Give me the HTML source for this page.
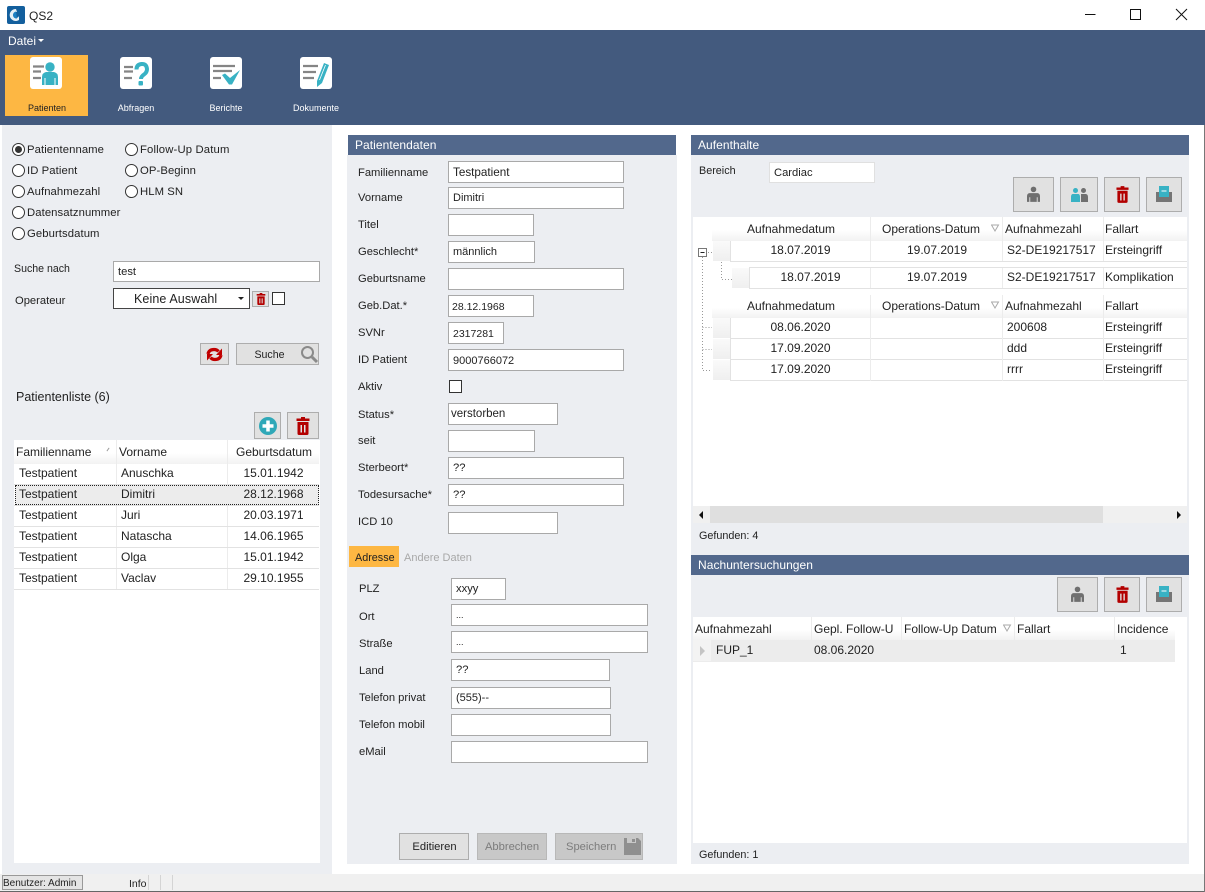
<!DOCTYPE html>
<html lang="de"><head><meta charset="utf-8"><title>QS2</title>
<style>
html,body{margin:0;padding:0;width:1205px;height:892px;overflow:hidden;background:#fff}
body{position:relative;font-family:"Liberation Sans",sans-serif;font-size:11.200px;color:#222;letter-spacing:0}
div,span,svg{position:absolute;box-sizing:border-box}
.t{line-height:18px;white-space:nowrap;height:18px}
.t.g,.t.rl,.t.p{line-height:16px;height:16px}
.g{font-size:12px}
.c{transform:translateX(-50%)}
.hd{background:#52688c;color:#fff;height:20px;line-height:20px;padding-left:7px;font-size:12px;letter-spacing:.05px}
.i{background:#fff;border:1px solid #a9a9a9;height:22px;line-height:21px;padding-left:4px;white-space:nowrap}
.b{background:#e1e1e1;border:1px solid #adadad}
.r{width:13px;height:13px;border:1px solid #333;border-radius:50%;background:#fff}
.gh{background:linear-gradient(#fff 0%,#fff 55%,#f2f2f2 100%)}
.rh{background:linear-gradient(#fafafa,#efefef)}
.l{background:#e2e2e2}
.rl{font-size:9px;color:#fff}
.ra{letter-spacing:.08px;font-size:11.300px}
</style></head><body>
<svg width="0" height="0" style="left:0;top:0">
<symbol id="trash" viewBox="0 0 14 18"><path fill="#b30000" fill-rule="evenodd" d="M5 0h4v1.500h4.500v2.500H.5V1.500H5zM1.500 5h11v11.500q0 1.500-1.500 1.500H3q-1.500 0-1.500-1.500zM4.500 8v7.500h1.500V8zM8 8v7.500h1.500V8z"/></symbol>
<symbol id="person" viewBox="0 0 14 18"><circle cx="7" cy="3.500" r="3" fill="#6f6f6f"/><path fill="#6f6f6f" d="M2.500 7.500h9Q14 8 14 11v6h-2.500v-5h-1v5h-7v-5h-1v5H0v-6q0-3 2.500-3.500z"/></symbol>
<symbol id="save" viewBox="0 0 16 16"><path fill="#757575" d="M0 6h3v5h10V6h3v10H0z"/><rect x="3" y="0" width="10" height="11" fill="#38b2c4"/><rect x="5.500" y="4.500" width="5" height="1" fill="#fff"/></symbol>
</svg>

<!-- title bar -->
<svg style="left:7px;top:6px" width="18" height="18" viewBox="0 0 18 18"><rect width="18" height="18" rx="2" fill="#135f9d"/><path d="M9 3a6 6 0 1 0 3 11V10a3 3 0 1 1-2-4z" fill="#fff" opacity=".9"/><path d="M12 3h3v12h-3z" fill="#135f9d"/><path d="M9 5.500a3.500 3.500 0 1 0 1 7z" fill="#1d7fc2"/></svg>
<div class="t p" style="left:29px;top:8px;font-size:12px">QS2</div>
<svg style="left:1080px;top:5px" width="115" height="20" viewBox="0 0 115 20" fill="none" stroke="#111" stroke-width="1"><path d="M5 9.500h10.500M50.500 4.500h10v10h-10zM96 4l11 11M107 4L96 15"/></svg>

<!-- ribbon -->
<div style="left:0;top:30px;width:1205px;height:95px;background:#435a7e"></div>
<div class="t p" style="left:8px;top:33px;color:#fff;font-size:12px">Datei</div>
<div style="left:38px;top:39px;width:0;height:0;border:3px solid transparent;border-top:3px solid #fff;border-bottom:0"></div>
<div style="left:5px;top:55px;width:83px;height:61px;background:#fdb743"></div>

<svg style="left:30px;top:57px" width="32" height="32" viewBox="0 0 32 32"><rect width="32" height="32" rx="3" fill="#fff"/><path d="M3 9.500h11M3 14.500h8M3 21h8" stroke="#858585" stroke-width="2.200"/><circle cx="20" cy="10" r="4.700" fill="#38b2c4"/><path d="M12 28V20q0-4 4-5h8q4 1 4 5v8h-2.500v-7h-1v7h-9v-7h-1v7z" fill="#38b2c4"/></svg>
<svg style="left:120px;top:57px" width="32" height="32" viewBox="0 0 32 32"><rect width="32" height="32" rx="3" fill="#fff"/><path d="M4 10h9M4 14.500h9M4 21h8" stroke="#858585" stroke-width="2.200"/><path d="M16.500 12.500q0-5 5-5.500t5.500 5q0 3.500-3 5.500t-3 4.500" fill="none" stroke="#38b2c4" stroke-width="4"/><rect x="18.500" y="24" width="4.500" height="4.500" rx="1" fill="#38b2c4"/></svg>
<svg style="left:210px;top:57px" width="32" height="32" viewBox="0 0 32 32"><rect width="32" height="32" rx="3" fill="#fff"/><path d="M3 9h22M3 14h19M3 21h8" stroke="#858585" stroke-width="2.200"/><path d="M12 18l3-1.500 5 4.500 10-8-8 14.500h-3z" fill="#38b2c4"/></svg>
<svg style="left:300px;top:57px" width="32" height="32" viewBox="0 0 32 32"><rect width="32" height="32" rx="3" fill="#fff"/><path d="M3 9h15M3 15h13M3 21h11" stroke="#858585" stroke-width="2.200"/><path d="M24 6l5 2-7 18-5 4 0-6z" fill="#38b2c4"/><path d="M25.500 8l-6 15" stroke="#fff" stroke-width=".8"/></svg>

<div class="t c rl" style="left:47px;top:100px;color:#222">Patienten</div>
<div class="t c rl" style="left:136px;top:100px">Abfragen</div>
<div class="t c rl" style="left:226px;top:100px">Berichte</div>
<div class="t c rl" style="left:316px;top:100px">Dokumente</div>

<!-- left panel -->
<div style="left:2px;top:125px;width:330px;height:749px;background:#eceef2"></div>
<div class="r" style="left:12px;top:143px"></div><div style="left:15px;top:146px;width:7px;height:7px;border-radius:50%;background:#333"></div>
<div class="r" style="left:12px;top:164px"></div><div class="r" style="left:12px;top:185px"></div><div class="r" style="left:12px;top:206px"></div><div class="r" style="left:12px;top:227px"></div>
<div class="r" style="left:125px;top:143px"></div><div class="r" style="left:125px;top:164px"></div><div class="r" style="left:125px;top:185px"></div>
<div class="t ra" style="left:27px;top:141px">Patientenname</div>
<div class="t ra" style="left:27px;top:162px">ID Patient</div>
<div class="t ra" style="left:27px;top:183px">Aufnahmezahl</div>
<div class="t ra" style="left:27px;top:204px">Datensatznummer</div>
<div class="t ra" style="left:27px;top:225px">Geburtsdatum</div>
<div class="t ra" style="left:140px;top:141px;letter-spacing:.15px">Follow-Up Datum</div>
<div class="t ra" style="left:140px;top:162px">OP-Beginn</div>
<div class="t ra" style="left:140px;top:183px">HLM SN</div>

<div class="t" style="left:14px;top:260px;font-size:10.600px">Suche nach</div>
<div class="i" style="left:113px;top:261px;width:207px;height:21px;line-height:20px">test</div>
<div class="t" style="left:15px;top:292px">Operateur</div>
<div style="left:113px;top:288px;width:137px;height:21px;background:#fff;border:1px solid #444"></div>
<div class="t" style="left:134px;top:290px;font-size:12.500px;letter-spacing:.1px">Keine Auswahl</div>
<div style="left:238px;top:297px;width:0;height:0;border:3px solid transparent;border-top:3px solid #222;border-bottom:0"></div>
<div class="b" style="left:252px;top:291px;width:17px;height:16px"></div>
<svg style="left:256px;top:293px" width="10" height="12"><use href="#trash"/></svg>
<div style="left:272px;top:292px;width:13px;height:13px;background:#fff;border:1px solid #333"></div>

<div class="b" style="left:200px;top:343px;width:29px;height:22px"></div>
<svg style="left:205px;top:347px" width="19" height="15" viewBox="0 0 19 15" fill="none" stroke="#c00000" stroke-width="3.200"><path d="M3 7q1-4.500 6-4.500 3 0 4.500 2"/><path d="M16 8q-1 4.500-6 4.500-3 0-4.500-2"/><path d="M11 8l6-6.500V8zM8 7l-6 6.500V7z" fill="#c00000" stroke="none"/></svg>
<div class="b" style="left:236px;top:343px;width:83px;height:22px"></div>
<div class="t c" style="left:269.500px;top:346px;font-size:10.600px">Suche</div>
<svg style="left:299px;top:344px" width="20" height="20" viewBox="0 0 20 20" fill="none" stroke="#8a8a8a"><circle cx="8.500" cy="8.500" r="5.500" stroke-width="2"/><path d="M13 13l5 5" stroke-width="3"/></svg>

<div class="t p" style="left:16px;top:389px;font-size:12.500px">Patientenliste (6)</div>
<div class="b" style="left:254px;top:412px;width:27px;height:27px"></div>
<svg style="left:259px;top:417px" width="18" height="18" viewBox="0 0 18 18"><circle cx="9" cy="9" r="9" fill="#2fa8b8"/><path d="M9 3.500v11M3.500 9h11" stroke="#fff" stroke-width="3.500"/></svg>
<div class="b" style="left:287px;top:412px;width:32px;height:27px"></div>
<svg style="left:296px;top:417px" width="14" height="18"><use href="#trash"/></svg>

<div style="left:14px;top:440px;width:306px;height:423px;background:#fff"></div>
<div class="gh" style="left:14px;top:440px;width:305px;height:24px"></div>
<div class="l" style="left:116px;top:440px;width:1px;height:149px;background:#ececec"></div>
<div class="l" style="left:227px;top:440px;width:1px;height:149px;background:#ececec"></div>
<div class="t g" style="left:16px;top:444px">Familienname</div>
<div class="t g" style="left:119px;top:444px">Vorname</div>
<div class="t g" style="left:236px;top:444px">Geburtsdatum</div>
<div style="left:106px;top:449px;width:4px;height:1px;background:#999;transform:rotate(-55deg)"></div>

<div style="left:15px;top:485px;width:304px;height:20px;background:#ececec;border:1px dotted #222"></div>
<div class="l" style="left:14px;top:484px;width:305px;height:1px"></div>
<div class="l" style="left:14px;top:505px;width:305px;height:1px"></div>
<div class="l" style="left:14px;top:526px;width:305px;height:1px"></div>
<div class="l" style="left:14px;top:547px;width:305px;height:1px"></div>
<div class="l" style="left:14px;top:568px;width:305px;height:1px"></div>
<div class="l" style="left:14px;top:589px;width:305px;height:1px"></div>

<div class="t g" style="left:19px;top:465px">Testpatient</div><div class="t g" style="left:121px;top:465px">Anuschka</div><div class="t c g" style="left:273.500px;top:465px">15.01.1942</div>
<div class="t g" style="left:19px;top:486px">Testpatient</div><div class="t g" style="left:121px;top:486px">Dimitri</div><div class="t c g" style="left:273.500px;top:486px">28.12.1968</div>
<div class="t g" style="left:19px;top:507px">Testpatient</div><div class="t g" style="left:121px;top:507px">Juri</div><div class="t c g" style="left:273.500px;top:507px">20.03.1971</div>
<div class="t g" style="left:19px;top:528px">Testpatient</div><div class="t g" style="left:121px;top:528px">Natascha</div><div class="t c g" style="left:273.500px;top:528px">14.06.1965</div>
<div class="t g" style="left:19px;top:549px">Testpatient</div><div class="t g" style="left:121px;top:549px">Olga</div><div class="t c g" style="left:273.500px;top:549px">15.01.1942</div>
<div class="t g" style="left:19px;top:570px">Testpatient</div><div class="t g" style="left:121px;top:570px">Vaclav</div><div class="t c g" style="left:273.500px;top:570px">29.10.1955</div>

<!-- middle panel -->
<div style="left:347px;top:155px;width:330px;height:709px;background:#eceef2"></div>
<div class="hd" style="left:348px;top:135px;width:328px">Patientendaten</div>

<div class="t" style="left:358px;top:164px">Familienname</div><div class="i" style="left:448px;top:161px;width:176px;font-size:11.700px">Testpatient</div>
<div class="t" style="left:358px;top:189px">Vorname</div><div class="i" style="left:448px;top:187px;width:176px;font-size:11px">Dimitri</div>
<div class="t" style="left:358px;top:216px">Titel</div><div class="i" style="left:448px;top:214px;width:86px"></div>
<div class="t" style="left:358px;top:243px">Geschlecht*</div><div class="i" style="left:448px;top:241px;width:87px;font-size:11px">männlich</div>
<div class="t" style="left:358px;top:270px">Geburtsname</div><div class="i" style="left:448px;top:268px;width:176px"></div>
<div class="t" style="left:358px;top:297px">Geb.Dat.*</div><div class="i" style="left:448px;top:295px;width:86px;font-size:10.500px;padding-left:3px;line-height:22px">28.12.1968</div>
<div class="t" style="left:358px;top:324px">SVNr</div><div class="i" style="left:448px;top:322px;width:56px;font-size:10.500px;line-height:22px">2317281</div>
<div class="t" style="left:358px;top:351px">ID Patient</div><div class="i" style="left:448px;top:349px;width:176px;font-size:11px;line-height:22px">9000766072</div>
<div class="t" style="left:358px;top:378px">Aktiv</div><div style="left:449px;top:380px;width:13px;height:13px;background:#fff;border:1px solid #333"></div>
<div class="t" style="left:358px;top:406px">Status*</div><div class="i" style="left:448px;top:403px;width:110px;padding-left:2px;font-size:11.500px">verstorben</div>
<div class="t" style="left:358px;top:432px">seit</div><div class="i" style="left:448px;top:430px;width:87px"></div>
<div class="t" style="left:358px;top:459px">Sterbeort*</div><div class="i" style="left:448px;top:457px;width:176px">??</div>
<div class="t" style="left:358px;top:486px">Todesursache*</div><div class="i" style="left:448px;top:484px;width:176px">??</div>
<div class="t" style="left:358px;top:513px">ICD 10</div><div class="i" style="left:448px;top:512px;width:110px"></div>

<div style="left:349px;top:546px;width:50px;height:21px;background:#fdb743"></div>
<div class="t" style="left:355px;top:549px;font-size:10.800px">Adresse</div>
<div class="t" style="left:404px;top:549px;color:#a8a8a8;font-size:11px">Andere Daten</div>

<div class="t" style="left:359px;top:580px">PLZ</div><div class="i" style="left:451px;top:578px;width:55px">xxyy</div>
<div class="t" style="left:359px;top:608px">Ort</div><div class="i" style="left:451px;top:604px;width:197px;font-size:9px">...</div>
<div class="t" style="left:359px;top:635px">Straße</div><div class="i" style="left:451px;top:631px;width:197px;font-size:9px">...</div>
<div class="t" style="left:359px;top:662px">Land</div><div class="i" style="left:451px;top:659px;width:159px">??</div>
<div class="t" style="left:359px;top:689px">Telefon privat</div><div class="i" style="left:451px;top:687px;width:160px;font-size:11px">(555)--</div>
<div class="t" style="left:359px;top:716px">Telefon mobil</div><div class="i" style="left:451px;top:714px;width:160px"></div>
<div class="t" style="left:359px;top:743px">eMail</div><div class="i" style="left:451px;top:741px;width:197px"></div>

<div class="b" style="left:399px;top:833px;width:70px;height:27px"></div>
<div class="t c" style="left:434.500px;top:838px">Editieren</div>
<div style="left:477px;top:833px;width:70px;height:27px;background:#c8c8c8;border:1px solid #b8b8b8"></div>
<div class="t c" style="left:512px;top:838px;color:#7c7c7c">Abbrechen</div>
<div style="left:555px;top:833px;width:88px;height:27px;background:#c8c8c8;border:1px solid #b8b8b8"></div>
<div class="t" style="left:566px;top:838px;color:#7c7c7c">Speichern</div>
<svg style="left:624px;top:838px" width="17" height="17" viewBox="0 0 17 17"><path fill="#8f8f8f" d="M0 0h3v5h9V0h2l3 3v14H0z"/><rect x="8" y="1" width="3" height="3" fill="#8f8f8f"/></svg>

<!-- right panel -->
<div style="left:691px;top:155px;width:498px;height:709px;background:#eceef2"></div>
<div class="hd" style="left:691px;top:135px;width:498px">Aufenthalte</div>
<div class="t" style="left:699px;top:162px;font-size:10.800px">Bereich</div>
<div class="i" style="left:769px;top:162px;width:106px;height:21px;border-color:#e0e0e0">Cardiac</div>

<div class="b" style="left:1013px;top:177px;width:41px;height:35px"></div>
<svg style="left:1027px;top:186px" width="13" height="17"><use href="#person"/></svg>
<div class="b" style="left:1060px;top:177px;width:38px;height:35px"></div>
<svg style="left:1071px;top:188px" width="17" height="14" viewBox="0 0 17 14"><circle cx="4.500" cy="2.500" r="2.500" fill="#38b2c4"/><path d="M1.500 6h6Q9 6.500 9 9v5H0V9q0-2.500 1.500-3z" fill="#38b2c4"/><circle cx="12.500" cy="2.500" r="2.500" fill="#6f6f6f"/><path d="M10 6h5q2 .5 2 3v5h-7z" fill="#6f6f6f"/></svg>
<div class="b" style="left:1104px;top:177px;width:36px;height:35px"></div>
<svg style="left:1116px;top:186px" width="13" height="17"><use href="#trash"/></svg>
<div class="b" style="left:1146px;top:177px;width:36px;height:35px"></div>
<svg style="left:1156px;top:186px" width="16" height="16"><use href="#save"/></svg>

<div style="left:693px;top:217px;width:494px;height:289px;background:#fff"></div>
<div class="gh" style="left:712px;top:217px;width:475px;height:24px"></div>
<div class="gh" style="left:712px;top:295px;width:475px;height:23px"></div>
<div class="rh" style="left:713px;top:241px;width:17px;height:20px"></div>
<div class="rh" style="left:732px;top:268px;width:17px;height:20px"></div>
<div class="rh" style="left:713px;top:318px;width:17px;height:20px"></div>
<div class="rh" style="left:713px;top:339px;width:17px;height:20px"></div>
<div class="rh" style="left:713px;top:360px;width:17px;height:20px"></div>

<div class="l" style="left:730px;top:261px;width:457px;height:1px"></div>
<div class="l" style="left:749px;top:267px;width:438px;height:1px"></div>
<div class="l" style="left:749px;top:288px;width:438px;height:1px"></div>
<div class="l" style="left:730px;top:338px;width:457px;height:1px"></div>
<div class="l" style="left:730px;top:359px;width:457px;height:1px"></div>
<div class="l" style="left:730px;top:380px;width:457px;height:1px"></div>
<div class="l" style="left:730px;top:241px;width:1px;height:20px"></div>
<div class="l" style="left:749px;top:268px;width:1px;height:20px"></div>
<div class="l" style="left:730px;top:318px;width:1px;height:62px"></div>
<div class="l" style="left:870px;top:217px;width:1px;height:44px;background:#ececec"></div>
<div class="l" style="left:1002px;top:217px;width:1px;height:44px;background:#ececec"></div>
<div class="l" style="left:1103px;top:217px;width:1px;height:44px;background:#ececec"></div>
<div class="l" style="left:870px;top:268px;width:1px;height:20px;background:#ececec"></div>
<div class="l" style="left:1002px;top:268px;width:1px;height:20px;background:#ececec"></div>
<div class="l" style="left:1103px;top:268px;width:1px;height:20px;background:#ececec"></div>
<div class="l" style="left:870px;top:295px;width:1px;height:86px;background:#ececec"></div>
<div class="l" style="left:1002px;top:295px;width:1px;height:86px;background:#ececec"></div>
<div class="l" style="left:1103px;top:295px;width:1px;height:86px;background:#ececec"></div>

<svg style="left:696px;top:245px" width="40" height="130" fill="none" stroke="#999" stroke-dasharray="1 2"><path d="M6.500 12V125.500H16M6.500 82.500H16M6.500 104.500H16M12 7.500H16M25.500 17V34.500H36"/><rect x="2.500" y="3.500" width="8" height="8" stroke="#777" stroke-dasharray="none" fill="#fff"/><path d="M4.500 7.500h4" stroke="#222" stroke-dasharray="none"/></svg>

<div class="t g" style="left:747px;top:221px">Aufnahmedatum</div><div class="t g" style="left:882px;top:221px">Operations-Datum</div><div class="t g" style="left:1005px;top:221px">Aufnahmezahl</div><div class="t g" style="left:1105px;top:221px">Fallart</div>
<div class="t c g" style="left:800.500px;top:242px">18.07.2019</div><div class="t c g" style="left:937px;top:242px">19.07.2019</div><div class="t g" style="left:1007px;top:242px">S2-DE19217517</div><div class="t g" style="left:1105px;top:242px">Ersteingriff</div>
<div class="t c g" style="left:810.500px;top:269px">18.07.2019</div><div class="t c g" style="left:937px;top:269px">19.07.2019</div><div class="t g" style="left:1007px;top:269px">S2-DE19217517</div><div class="t g" style="left:1105px;top:269px">Komplikation</div>
<div class="t g" style="left:747px;top:298px">Aufnahmedatum</div><div class="t g" style="left:882px;top:298px">Operations-Datum</div><div class="t g" style="left:1005px;top:298px">Aufnahmezahl</div><div class="t g" style="left:1105px;top:298px">Fallart</div>
<div class="t c g" style="left:800.500px;top:319px">08.06.2020</div><div class="t g" style="left:1007px;top:319px">200608</div><div class="t g" style="left:1105px;top:319px">Ersteingriff</div>
<div class="t c g" style="left:800.500px;top:340px">17.09.2020</div><div class="t g" style="left:1007px;top:340px">ddd</div><div class="t g" style="left:1105px;top:340px">Ersteingriff</div>
<div class="t c g" style="left:800.500px;top:361px">17.09.2020</div><div class="t g" style="left:1007px;top:361px">rrrr</div><div class="t g" style="left:1105px;top:361px">Ersteingriff</div>

<svg style="left:991px;top:224px" width="9" height="8" fill="none" stroke="#aaa"><path d="M.5 1h7L4 7z"/></svg>
<svg style="left:991px;top:301px" width="9" height="8" fill="none" stroke="#aaa"><path d="M.5 1h7L4 7z"/></svg>

<div style="left:693px;top:506px;width:494px;height:17px;background:#f0f0f0"></div>
<div style="left:710px;top:506px;width:393px;height:17px;background:#dfdfdf"></div>
<div style="left:699px;top:511px;width:0;height:0;border:4px solid transparent;border-right:4px solid #111;border-left:0"></div>
<div style="left:1177px;top:511px;width:0;height:0;border:4px solid transparent;border-left:4px solid #111;border-right:0"></div>
<div class="t" style="left:699px;top:527px;font-size:10.800px">Gefunden: 4</div>

<div class="hd" style="left:691px;top:555px;width:498px">Nachuntersuchungen</div>
<div class="b" style="left:1057px;top:577px;width:41px;height:35px"></div>
<svg style="left:1071px;top:586px" width="13" height="17"><use href="#person"/></svg>
<div class="b" style="left:1104px;top:577px;width:36px;height:35px"></div>
<svg style="left:1116px;top:586px" width="13" height="17"><use href="#trash"/></svg>
<div class="b" style="left:1146px;top:577px;width:36px;height:35px"></div>
<svg style="left:1156px;top:586px" width="16" height="16"><use href="#save"/></svg>

<div style="left:693px;top:617px;width:494px;height:226px;background:#fff"></div>
<div class="gh" style="left:693px;top:617px;width:482px;height:23px"></div>
<div style="left:693px;top:640px;width:482px;height:22px;background:#ececec"></div>
<div style="left:693px;top:640px;width:18px;height:21px;background:#f3f3f3"></div>
<div style="left:700px;top:646px;width:0;height:0;border:5px solid transparent;border-left:5px solid #c4c4c4;border-right:0"></div>
<div class="l" style="left:811px;top:617px;width:1px;height:23px;background:#ececec"></div>
<div class="l" style="left:901px;top:617px;width:1px;height:23px;background:#ececec"></div>
<div class="l" style="left:1014px;top:617px;width:1px;height:23px;background:#ececec"></div>
<div class="l" style="left:1114px;top:617px;width:1px;height:23px;background:#ececec"></div>
<div class="t g" style="left:695px;top:621px">Aufnahmezahl</div><div class="t g" style="left:814px;top:621px">Gepl. Follow-U</div><div class="t g" style="left:904px;top:621px">Follow-Up Datum</div><div class="t g" style="left:1017px;top:621px">Fallart</div><div class="t g" style="left:1117px;top:621px">Incidence</div>
<svg style="left:1003px;top:624px" width="9" height="8" fill="none" stroke="#aaa"><path d="M.5 1h7L4 7z"/></svg>
<div class="t g" style="left:716px;top:642px">FUP_1</div><div class="t g" style="left:814px;top:642px">08.06.2020</div><div class="t g" style="left:1120px;top:642px">1</div>
<div class="t" style="left:699px;top:846px;font-size:10.800px">Gefunden: 1</div>

<!-- status -->
<div style="left:0;top:874px;width:1205px;height:17px;background:#f0f0f0"></div>
<div style="left:2px;top:875px;width:81px;height:15px;background:#e4e4e4;border:1px solid #999"></div>
<div class="t" style="left:3px;top:875px;font-size:10px">Benutzer: Admin</div>
<div class="t" style="left:129px;top:875px;font-size:10.500px">Info</div>
<div style="left:148px;top:875px;width:1px;height:15px;background:#d4d4d4"></div>
<div style="left:160px;top:875px;width:1px;height:15px;background:#d4d4d4"></div>
<div style="left:172px;top:875px;width:1px;height:15px;background:#d4d4d4"></div>
<div style="left:0;top:891px;width:1205px;height:1px;background:#666"></div>
<div style="left:1204px;top:125px;width:1px;height:767px;background:#777"></div>
</body></html>
